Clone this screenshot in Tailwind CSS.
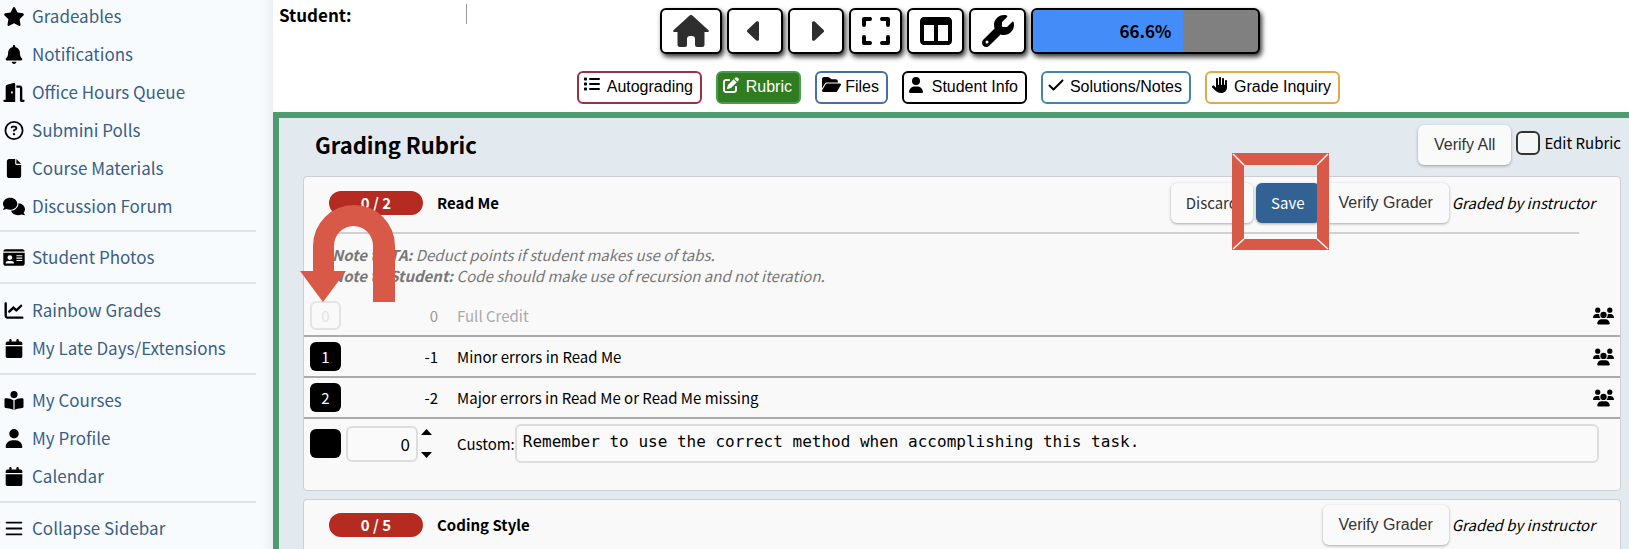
<!DOCTYPE html>
<html lang="en">
<head>
<meta charset="utf-8">
<title>Grading Rubric</title>
<script src="https://cdn.jsdelivr.net/npm/@tailwindcss/browser@4"></script>
</head>
<body class="flex min-h-screen overflow-x-hidden bg-white font-['Noto_Sans_CJK_SC','Noto_Sans',sans-serif] text-[15px] leading-5 text-black">

<svg class="hidden" aria-hidden="true">
  <symbol id="star" viewBox="0 0 576 512"><path d="M316.900 18C311.600 7 300.400 0 288.100 0s-23.400 7-28.800 18L195 150.300 51.400 171.500c-12 1.800-22 10.200-25.700 21.700s-.7 24.200 7.900 32.700L137.800 329 113.200 474.700c-2 12 3 24.200 12.900 31.300s23 8 33.800 2.300l128.300-68.500 128.300 68.500c10.800 5.700 23.900 4.900 33.800-2.300s14.900-19.300 12.900-31.300L438.500 329 542.700 225.900c8.600-8.500 11.700-21.200 7.900-32.700s-13.700-19.900-25.700-21.700L381.200 150.300 316.900 18z"/></symbol>
  <symbol id="bell" viewBox="0 0 448 512"><path d="M224 0c-17.700 0-32 14.300-32 32V51.200C119 66 64 130.600 64 208v18.800c0 47-17.300 92.400-48.500 127.600l-7.400 8.300c-8.400 9.400-10.400 22.900-5.300 34.400S19.400 416 32 416H416c12.600 0 24-7.400 29.200-18.900s3.100-25-5.300-34.400l-7.400-8.300C401.300 319.200 384 273.900 384 226.800V208c0-77.400-55-142-128-156.800V32c0-17.700-14.300-32-32-32zm45.300 493.300c12-12 18.700-28.300 18.700-45.300H224 160c0 17 6.700 33.300 18.700 45.300s28.300 18.700 45.300 18.700s33.300-6.700 45.300-18.700z"/></symbol>
  <symbol id="door" viewBox="0 0 576 512"><path d="M320 32c0-9.900-4.500-19.200-12.300-25.200S289.800-1.400 280.200 1l-179.900 45C79 51.300 64 70.500 64 92.500V448H32c-17.700 0-32 14.300-32 32s14.300 32 32 32H96 288h32V480 32zM256 256c0 17.700-10.700 32-24 32s-24-14.300-24-32s10.700-32 24-32s24 14.300 24 32zm96-128h96V480c0 17.700 14.300 32 32 32h64c17.700 0 32-14.300 32-32s-14.300-32-32-32H512V128c0-35.300-28.700-64-64-64H352v64z"/></symbol>
  <symbol id="question" viewBox="0 0 512 512"><path d="M464 256A208 208 0 1 0 48 256a208 208 0 1 0 416 0zM0 256a256 256 0 1 1 512 0A256 256 0 1 1 0 256zm169.800-90.700c7.900-22.300 29.100-37.300 52.800-37.300h58.300c34.900 0 63.100 28.300 63.100 63.100c0 22.600-12.100 43.500-31.700 54.800L280 264.400c-.2 13-10.900 23.600-24 23.600c-13.300 0-24-10.700-24-24V250.500c0-8.600 4.600-16.500 12.100-20.800l44.300-25.400c4.700-2.700 7.600-7.700 7.600-13.100c0-8.400-6.800-15.100-15.100-15.100H222.600c-3.400 0-6.400 2.100-7.500 5.300l-.4 1.200c-4.400 12.500-18.200 19-30.600 14.600s-19-18.200-14.600-30.600l.4-1.200zM224 352a32 32 0 1 1 64 0 32 32 0 1 1-64 0z"/></symbol>
  <symbol id="file" viewBox="0 0 384 512"><path d="M0 64C0 28.700 28.700 0 64 0H224V128c0 17.700 14.300 32 32 32H384V448c0 35.300-28.700 64-64 64H64c-35.300 0-64-28.700-64-64V64zm384 64H256V0L384 128z"/></symbol>
  <symbol id="comments" viewBox="0 0 640 512"><path d="M208 352c114.900 0 208-78.800 208-176S322.900 0 208 0S0 78.800 0 176c0 38.600 14.700 74.300 39.600 103.400c-3.500 9.400-8.700 17.700-14.200 24.700c-4.800 6.200-9.700 11-13.300 14.300c-6.600 6-12.100 9-12.100 17.600c0 9 7 16 16 16c21.900 0 43.900-5.600 62.200-12.500c9.200-3.500 17.800-7.400 25.300-11.400C134.100 343.300 169.800 352 208 352zM448 176c0 112.300-99.100 196.900-216.500 207C255.800 457.400 336.400 512 432 512c38.200 0 73.900-8.700 104.700-23.900c7.500 4 16 7.900 25.200 11.400c18.300 6.900 40.300 12.500 62.200 12.500c9 0 16-7 16-16c0-7-4-11-12.100-17.600c-3.600-3.300-8.500-8.100-13.300-14.300c-5.400-7-10.700-15.400-14.200-24.700c24.900-29 39.600-64.700 39.600-103.400c0-92.800-84.900-168.900-192.600-175.500c.4 5.100 .6 10.300 .6 15.500z"/></symbol>
  <symbol id="idcard" viewBox="0 0 576 512"><path fill-rule="evenodd" d="M0 96l576 0c0-35.300-28.700-64-64-64H64C28.700 32 0 60.700 0 96zm0 32V416c0 35.300 28.700 64 64 64H512c35.300 0 64-28.700 64-64V128H0zM64 405c0-34 25-53 65-53h94c40 0 65 19 65 53v11H64v-11zM176 192a64 64 0 1 1 0 128 64 64 0 1 1 0-128zm176 0h160v32H352v-32zm0 64h160v32H352v-32zm0 64h160v32H352v-32z"/></symbol>
  <symbol id="chart" viewBox="0 0 512 512"><path d="M64 64c0-17.700-14.300-32-32-32S0 46.300 0 64V400c0 44.200 35.800 80 80 80H480c17.700 0 32-14.300 32-32s-14.300-32-32-32H80c-8.800 0-16-7.200-16-16V64zm406.600 86.600c12.500-12.500 12.500-32.800 0-45.300s-32.800-12.500-45.300 0L320 210.700l-57.400-57.400c-12.500-12.500-32.800-12.500-45.300 0l-112 112c-12.500 12.500-12.500 32.800 0 45.300s32.800 12.500 45.300 0L240 221.300l57.400 57.400c12.500 12.500 32.800 12.500 45.300 0l128-128z"/></symbol>
  <symbol id="calendar" viewBox="0 0 448 512"><path d="M96 32V64H48C21.500 64 0 85.500 0 112v48H448V112c0-26.500-21.500-48-48-48H352V32c0-17.700-14.300-32-32-32s-32 14.300-32 32V64H160V32c0-17.700-14.300-32-32-32S96 14.300 96 32zM448 192H0V464c0 26.500 21.500 48 48 48H400c26.500 0 48-21.500 48-48V192z"/></symbol>
  <symbol id="reader" viewBox="0 0 512 512"><path d="M160 96a96 96 0 1 1 192 0A96 96 0 1 1 160 96zm80 152V512l-48.400-24.200c-20.900-10.400-43.500-17-66.800-19.300l-96-9.600C12.500 457.200 0 443.500 0 427V224c0-17.700 14.300-32 32-32H62.300c63.600 0 125.600 19.600 177.700 56zm32 264V248c52.100-36.400 114.100-56 177.700-56H480c17.700 0 32 14.300 32 32V427c0 16.400-12.500 30.200-28.800 31.800l-96 9.600c-23.200 2.300-45.900 8.900-66.800 19.300L272 512z"/></symbol>
  <symbol id="user" viewBox="0 0 448 512"><path d="M224 256A128 128 0 1 0 224 0a128 128 0 1 0 0 256zm-45.700 48C79.800 304 0 383.800 0 482.300C0 498.700 13.300 512 29.700 512H418.300c16.400 0 29.700-13.300 29.700-29.700C448 383.800 368.200 304 269.700 304H178.300z"/></symbol>
  <symbol id="bars" viewBox="0 0 448 512"><path d="M24 72H424a24 24 0 0 1 0 48H24a24 24 0 0 1 0-48zM24 232H424a24 24 0 0 1 0 48H24a24 24 0 0 1 0-48zM24 392H424a24 24 0 0 1 0 48H24a24 24 0 0 1 0-48z"/></symbol>
  <symbol id="home" viewBox="0 0 36 32"><path d="M16.600.6a2 2 0 0 1 2.800 0L35.300 15c1 .9.500 2-.7 2H31.500v12.500a2.500 2.500 0 0 1-2.500 2.500h-5a2 2 0 0 1-2-2v-6a3 3 0 0 0-3-3h-2a3 3 0 0 0-3 3v6a2 2 0 0 1-2 2H7a2.500 2.500 0 0 1-2.500-2.500V17H1.400c-1.200 0-1.700-1.100-.7-2z"/></symbol>
  <symbol id="left" viewBox="0 0 12 20"><path d="M9.300.6C10.400-.4 12 .3 12 1.800v16.400c0 1.500-1.600 2.200-2.700 1.200L.6 11.200a1.600 1.600 0 0 1 0-2.400z"/></symbol>
  <symbol id="expand" viewBox="0 0 28 28"><path fill="none" stroke="currentColor" stroke-width="4" stroke-linecap="round" stroke-linejoin="round" d="M2 8V2h6M20 2h6v6M26 20v6h-6M8 26H2v-6"/></symbol>
  <symbol id="columns" viewBox="0 0 512 448"><path fill-rule="evenodd" d="M0 64C0 28.700 28.700 0 64 0H448c35.300 0 64 28.700 64 64V384c0 35.300-28.700 64-64 64H64c-35.300 0-64-28.700-64-64V64zm64 64V384H224V128H64zm384 0H288V384H448V128z"/></symbol>
  <symbol id="wrench" viewBox="0 0 512 512"><path d="M352 320c88.400 0 160-71.600 160-160c0-15.300-2.200-30.100-6.200-44.200c-3.100-10.800-16.400-13.200-24.300-5.300l-76.800 76.800c-3 3-7.100 4.700-11.300 4.700H336c-8.800 0-16-7.200-16-16V118.600c0-4.200 1.700-8.300 4.700-11.300l76.800-76.800c7.900-7.900 5.400-21.200-5.300-24.300C382.100 2.200 367.300 0 352 0C263.600 0 192 71.600 192 160c0 19.100 3.400 37.500 9.500 54.500L19.900 396.100C7.200 408.800 0 426.100 0 444.100C0 481.600 30.400 512 67.900 512c18 0 35.300-7.200 48-19.900L297.500 310.500c17 6.200 35.400 9.500 54.500 9.500zM80 408a24 24 0 1 1 0 48 24 24 0 1 1 0-48z"/></symbol>
  <symbol id="list" viewBox="0 0 512 448"><path d="M24 16H72a24 24 0 0 1 24 24V88a24 24 0 0 1-24 24H24A24 24 0 0 1 0 88V40A24 24 0 0 1 24 16zM24 176H72a24 24 0 0 1 24 24V248a24 24 0 0 1-24 24H24A24 24 0 0 1 0 248V200A24 24 0 0 1 24 176zM24 336H72a24 24 0 0 1 24 24V408a24 24 0 0 1-24 24H24A24 24 0 0 1 0 408V360A24 24 0 0 1 24 336zM192 32H480a32 32 0 0 1 0 64H192a32 32 0 0 1 0-64zM192 192H480a32 32 0 0 1 0 64H192a32 32 0 0 1 0-64zM192 352H480a32 32 0 0 1 0 64H192a32 32 0 0 1 0-64z"/></symbol>
  <symbol id="edit" viewBox="0 0 512 512"><path d="M471.600 21.700c-21.900-21.900-57.300-21.900-79.200 0L362.300 51.700l97.900 97.900 30.100-30.100c21.900-21.900 21.900-57.300 0-79.200L471.600 21.700zm-299.200 220c-6.100 6.100-10.800 13.600-13.500 21.900l-29.600 88.800c-2.900 8.600-.6 18.100 5.800 24.600s15.900 8.700 24.600 5.800l88.800-29.600c8.200-2.700 15.700-7.400 21.900-13.500L437.700 172.300 339.700 74.300 172.400 241.700zM96 64C43 64 0 107 0 160V416c0 53 43 96 96 96H352c53 0 96-43 96-96V320c0-17.700-14.300-32-32-32s-32 14.300-32 32v96c0 17.700-14.300 32-32 32H96c-17.700 0-32-14.300-32-32V160c0-17.700 14.300-32 32-32h96c17.700 0 32-14.300 32-32s-14.300-32-32-32H96z"/></symbol>
  <symbol id="folder" viewBox="0 0 576 448"><path d="M88.700 191.800C100.100 172.200 121 160 143.800 160H480v-32c0-35.300-28.700-64-64-64H298.500c-17 0-33.300-6.700-45.300-18.700L226.700 18.700C214.700 6.700 198.500 0 181.500 0H64C28.700 0 0 28.700 0 64V343.700L88.700 191.800zM116.400 207.900 4.400 399.900c-5.800 9.900-5.800 22.100-.1 32.100S20.500 448 32 448H432c11.400 0 21.900-6 27.600-15.900l112-192c5.800-9.900 5.800-22.100 .1-32.100S555.500 192 544 192H144c-11.400 0-21.900 6-27.600 15.900z"/></symbol>
  <symbol id="check" viewBox="0 0 16 12"><path fill="none" stroke="currentColor" stroke-width="2" stroke-linecap="round" stroke-linejoin="round" d="M1.500 6.500l4 4L14.500 1.500"/></symbol>
  <symbol id="hand" viewBox="0 0 512 512"><path d="M288 32c0-17.700-14.300-32-32-32s-32 14.300-32 32V240c0 8.800-7.200 16-16 16s-16-7.200-16-16V64c0-17.700-14.300-32-32-32s-32 14.300-32 32V336c0 1.500 0 3.100 .1 4.600L67.600 283c-16-15.200-41.300-14.600-56.600 1.400s-14.600 41.300 1.400 56.600L124.800 448c43.100 41.100 100.400 64 160 64H304c97.200 0 176-78.800 176-176V128c0-17.700-14.300-32-32-32s-32 14.300-32 32V240c0 8.800-7.200 16-16 16s-16-7.200-16-16V64c0-17.700-14.300-32-32-32s-32 14.300-32 32V240c0 8.800-7.200 16-16 16s-16-7.200-16-16V32z"/></symbol>
  <symbol id="users" viewBox="0 0 640 512"><path d="M144 0a80 80 0 1 1 0 160A80 80 0 1 1 144 0zM512 0a80 80 0 1 1 0 160A80 80 0 1 1 512 0zM0 298.700C0 239.800 47.800 192 106.700 192h42.700c15.900 0 31 3.500 44.600 9.700c-1.300 7.200-1.900 14.700-1.900 22.300c0 38.200 16.800 72.500 43.300 96H21.300C9.600 320 0 310.400 0 298.700zM405.300 320h-.7c26.600-23.500 43.300-57.800 43.300-96c0-7.600-.7-15-1.900-22.300c13.600-6.300 28.700-9.700 44.600-9.700h42.700C592.200 192 640 239.800 640 298.700c0 11.800-9.600 21.300-21.300 21.300H405.300zM224 224a96 96 0 1 1 192 0 96 96 0 1 1-192 0zM128 485.300C128 411.700 187.700 352 261.300 352H378.700C452.300 352 512 411.700 512 485.300c0 14.700-11.900 26.700-26.700 26.700H154.700c-14.700 0-26.700-11.900-26.700-26.700z"/></symbol>
</svg>

<nav class="w-[273px] shrink-0 bg-[#f8fbfe] pt-[3px] pr-[17px] text-[17px] text-[#3a5f86] shadow-[inset_-14px_0_12px_-12px_#e3e8ec]">
  <ul class="flex flex-col gap-3 pl-[3px]">
    <li><a href="#" class="flex h-[26px] items-center gap-[7px]"><svg class="h-[19px] w-[22px] shrink-0 fill-black"><use href="#star"/></svg>Gradeables</a></li>
    <li><a href="#" class="flex h-[26px] items-center gap-[7px]"><svg class="h-[19px] w-[22px] shrink-0 fill-black"><use href="#bell"/></svg>Notifications</a></li>
    <li><a href="#" class="flex h-[26px] items-center gap-[7px]"><svg class="h-[19px] w-[22px] shrink-0 fill-black"><use href="#door"/></svg>Office Hours Queue</a></li>
    <li><a href="#" class="flex h-[26px] items-center gap-[7px]"><svg class="h-[19px] w-[22px] shrink-0 fill-black"><use href="#question"/></svg>Submini Polls</a></li>
    <li><a href="#" class="flex h-[26px] items-center gap-[7px]"><svg class="h-[19px] w-[22px] shrink-0 fill-black"><use href="#file"/></svg>Course Materials</a></li>
    <li><a href="#" class="flex h-[26px] items-center gap-[7px]"><svg class="h-[19px] w-[22px] shrink-0 fill-black"><use href="#comments"/></svg>Discussion Forum</a></li>
  </ul>
  <hr class="mt-[11px] mb-3 border-t-2 border-[#dfe3e7]">
  <ul class="flex flex-col gap-3 pl-[3px]">
    <li><a href="#" class="flex h-[26px] items-center gap-[7px]"><svg class="h-[19px] w-[22px] shrink-0 fill-black"><use href="#idcard"/></svg>Student Photos</a></li>
  </ul>
  <hr class="mt-3 mb-[13px] border-t-2 border-[#dfe3e7]">
  <ul class="flex flex-col gap-3 pl-[3px]">
    <li><a href="#" class="flex h-[26px] items-center gap-[7px]"><svg class="h-[19px] w-[22px] shrink-0 fill-black"><use href="#chart"/></svg>Rainbow Grades</a></li>
    <li><a href="#" class="flex h-[26px] items-center gap-[7px]"><svg class="h-[19px] w-[22px] shrink-0 fill-black"><use href="#calendar"/></svg>My Late Days/Extensions</a></li>
  </ul>
  <hr class="my-3 border-t-2 border-[#dfe3e7]">
  <ul class="flex flex-col gap-3 pl-[3px]">
    <li><a href="#" class="flex h-[26px] items-center gap-[7px]"><svg class="h-[19px] w-[22px] shrink-0 fill-black"><use href="#reader"/></svg>My Courses</a></li>
    <li><a href="#" class="flex h-[26px] items-center gap-[7px]"><svg class="h-[19px] w-[22px] shrink-0 fill-black"><use href="#user"/></svg>My Profile</a></li>
    <li><a href="#" class="flex h-[26px] items-center gap-[7px]"><svg class="h-[19px] w-[22px] shrink-0 fill-black"><use href="#calendar"/></svg>Calendar</a></li>
  </ul>
  <hr class="my-3 border-t-2 border-[#dfe3e7]">
  <button type="button" class="ml-[3px] flex h-[26px] items-center gap-[7px]"><svg class="h-[19px] w-[22px] shrink-0 fill-black"><use href="#bars"/></svg>Collapse Sidebar</button>
</nav>

<main class="flex min-w-0 flex-1 flex-col">
  <header class="flex pt-2 pb-2">
    <div class="-mt-1 grow basis-[18px] pl-[6px]">
      <div class="flex w-[188px] items-start justify-between">
        <h1 class="pt-px text-[17px] font-bold">Student:</h1>
        <span class="h-5 w-px bg-[#999]"></span>
      </div>
    </div>
    <div class="flex flex-col items-center gap-[17px]">
      <div class="flex gap-[5px]">
        <button type="button" aria-label="Home" class="flex h-[46px] w-[62px] items-center justify-center rounded-md border-2 border-black bg-white shadow-[2px_3px_5px_#000c]"><svg class="h-8 w-9 fill-[#2e2e2e]"><use href="#home"/></svg></button>
        <button type="button" aria-label="Previous student" class="flex h-[46px] w-14 items-center justify-center rounded-md border-2 border-black bg-white pr-1 shadow-[2px_3px_5px_#000c]"><svg class="h-5 w-3 fill-[#2e2e2e]"><use href="#left"/></svg></button>
        <button type="button" aria-label="Next student" class="flex h-[46px] w-14 items-center justify-center rounded-md border-2 border-black bg-white pl-1 shadow-[2px_3px_5px_#000c]"><svg class="h-5 w-3 rotate-180 fill-[#2e2e2e]"><use href="#left"/></svg></button>
        <button type="button" aria-label="Full screen" class="flex h-[46px] w-[53px] items-center justify-center rounded-md border-2 border-black bg-white shadow-[2px_3px_5px_#000c]"><svg class="size-7"><use href="#expand"/></svg></button>
        <button type="button" aria-label="Two panel mode" class="flex h-[46px] w-[57px] items-center justify-center rounded-md border-2 border-black bg-white shadow-[2px_3px_5px_#000c]"><svg class="h-7 w-8 fill-black"><use href="#columns"/></svg></button>
        <button type="button" aria-label="Settings" class="flex h-[46px] w-[57px] items-center justify-center rounded-md border-2 border-black bg-white shadow-[2px_3px_5px_#000c]"><svg class="size-8 fill-black"><use href="#wrench"/></svg></button>
        <div role="progressbar" aria-valuenow="66.6" aria-label="Grading progress" class="grid h-[46px] w-[229px] overflow-hidden rounded-md border-2 border-black bg-[#808080] shadow-[2px_3px_5px_#000c]">
          <div class="col-start-1 row-start-1 bg-[#448cf7]" style="width:66.6%"></div>
          <span class="col-start-1 row-start-1 place-self-center text-[17px] font-bold">66.6%</span>
        </div>
      </div>
      <div class="flex gap-[14px] pr-[3px] font-['Liberation_Sans',sans-serif] text-base leading-5">
        <button type="button" class="flex h-[33px] w-[125px] items-start justify-between rounded-md border-2 border-[#9c3045] bg-white pt-[4px] pr-[7px] pl-[5px]"><svg class="h-[14px] w-4 fill-black"><use href="#list"/></svg>Autograding</button>
        <button type="button" class="flex h-[33px] w-[85px] items-start justify-between rounded-md border-2 border-[#4c9a4f] bg-[#2f7d20] pt-[4px] pr-[7px] pl-[5px] text-white"><svg class="size-4 fill-white"><use href="#edit"/></svg>Rubric</button>
        <button type="button" class="flex h-[33px] w-[73px] items-start justify-between rounded-md border-2 border-[#466fa6] bg-white pt-[4px] pr-[7px] pl-[5px]"><svg class="h-[15px] w-[19px] fill-black"><use href="#folder"/></svg>Files</button>
        <button type="button" class="flex h-[33px] w-[125px] items-start justify-between rounded-md border-2 border-black bg-white pt-[4px] pr-[7px] pl-[5px]"><svg class="h-4 w-[14px] fill-black"><use href="#user"/></svg>Student Info</button>
        <button type="button" class="flex h-[33px] w-[150px] items-start justify-between rounded-md border-2 border-[#4583b3] bg-white pt-[4px] pr-[7px] pl-[5px]"><svg class="mt-[2px] h-3 w-4"><use href="#check"/></svg>Solutions/Notes</button>
        <button type="button" class="flex h-[33px] w-[135px] items-start justify-between rounded-md border-2 border-[#e2a849] bg-white pt-[4px] pr-[7px] pl-[5px]"><svg class="size-4 fill-black"><use href="#hand"/></svg>Grade Inquiry</button>
      </div>
    </div>
    <div class="grow basis-0"></div>
  </header>

  <section class="flex-1 border-t-[6px] border-l-[6px] border-[#509a6f] bg-[#e2e9ef] pt-[7px] pr-2 pl-6">
    <div class="flex items-start justify-between pb-[11px]">
      <h2 class="pt-[5px] pl-3 text-[22px] leading-7 font-bold">Grading Rubric</h2>
      <div class="flex items-center gap-[5px]">
        <button type="button" class="h-10 rounded-md bg-[#fafafa] px-4 font-['Liberation_Sans',sans-serif] text-base text-[#333] shadow-[0_1px_3px_#0005]">Verify All</button>
        <label class="flex items-center gap-1 pb-1"><input type="checkbox" class="size-6 appearance-none rounded-md border-2 border-[#333] bg-[#f4f6f8]">Edit Rubric</label>
      </div>
    </div>

    <article class="relative rounded-sm border border-[#ccd0d4] bg-[#f9f9f9] pb-[27px]">
      <div class="flex h-[52px] items-center justify-between pr-[25px] pl-[25px]">
        <div class="flex items-center gap-[14px] font-bold">
          <span class="h-6 w-[94px] rounded-full bg-[#b52b22] text-center leading-6 text-white">0 / 2</span>
          <h3>Read Me</h3>
        </div>
        <div class="flex items-center gap-[3px]">
          <button type="button" class="h-10 rounded-md bg-[#fafafa] px-[15px] text-[#333] shadow-[0_1px_3px_#0005]">Discard</button>
          <div class="relative">
            <button type="button" class="h-10 rounded-md bg-[#316293] px-[15px] text-white shadow-[0_1px_3px_#0005]">Save</button>
            <svg class="absolute -top-[30px] -left-6 z-10 size-[97px]" viewBox="0 0 97 97" aria-hidden="true"><path fill="#d85947" fill-rule="evenodd" d="M0 0H97V97H0zM12 12V86H85V12z"/><path stroke="#fff" stroke-width="1.500" d="M1 1l11 11M96 1L85 12M1 96l11-10M96 96L85 86"/></svg>
          </div>
          <button type="button" class="h-10 rounded-md bg-[#fafafa] px-4 font-['Liberation_Sans',sans-serif] text-base text-[#333] shadow-[0_1px_3px_#0005]">Verify Grader</button>
          <em>Graded by instructor</em>
        </div>
      </div>
      <hr class="mt-[3px] mr-[41px] ml-[25px] border-t-2 border-[#d0d0d0]">
      <div class="pt-[10px] pb-[10px] pl-7 leading-[21px] text-[#777] italic">
        <p><strong>Note to TA:</strong> Deduct points if student makes use of tabs.</p>
        <p><strong>Note to Student:</strong> Code should make use of recursion and not iteration.</p>
      </div>
      <svg class="absolute top-7 -left-1 z-10 h-[97px] w-[95px]" viewBox="0 0 95 97" aria-hidden="true"><path fill="#d85947" d="M0 66H13V41a41 41 0 0 1 82 0V97H73V41a19.500 20 0 0 0-39 0V66H46L23 97z"/></svg>
      <ul>
        <li class="flex h-[41px] items-center border-b-2 border-[#aaa] pr-[6px] pl-[6px]">
          <button type="button" class="h-[29px] w-[31px] rounded-md border-2 border-[#e3e3e3] text-[#e3e3e3]">0</button>
          <span class="w-[97px] text-right text-[#999]">0</span>
          <span class="flex-1 pl-[19px] text-[#aaa]">Full Credit</span>
          <button type="button" aria-label="Show students"><svg class="h-[18px] w-[21px] fill-black"><use href="#users"/></svg></button>
        </li>
        <li class="flex h-[41px] items-center border-b-2 border-[#aaa] pr-[6px] pl-[6px]">
          <button type="button" class="h-[29px] w-[31px] rounded-md bg-black text-white">1</button>
          <span class="w-[97px] text-right">-1</span>
          <span class="flex-1 pl-[19px]">Minor errors in Read Me</span>
          <button type="button" aria-label="Show students"><svg class="h-[18px] w-[21px] fill-black"><use href="#users"/></svg></button>
        </li>
        <li class="flex h-[41px] items-center border-b-2 border-[#aaa] pr-[6px] pl-[6px]">
          <button type="button" class="h-[29px] w-[31px] rounded-md bg-black text-white">2</button>
          <span class="w-[97px] text-right">-2</span>
          <span class="flex-1 pl-[19px]">Major errors in Read Me or Read Me missing</span>
          <button type="button" aria-label="Show students"><svg class="h-[18px] w-[21px] fill-black"><use href="#users"/></svg></button>
        </li>
        <li class="flex items-center pt-[5px] pr-[21px] pl-[6px]">
          <button type="button" aria-label="Custom mark" class="h-[29px] w-[31px] rounded-md bg-black"></button>
          <input type="text" inputmode="numeric" aria-label="Custom points" value="0" class="ml-[5px] h-9 w-[72px] rounded-md border-2 border-[#ddd] bg-[#fafafa] pr-[6px] text-right text-[17px]">
          <div class="ml-[3px] flex w-[36px] flex-col gap-[17px]">
            <button type="button" aria-label="Increase points"><svg class="block h-[6px] w-[11px]" viewBox="0 0 11 6"><path d="M0 6L5.500 0 11 6z"/></svg></button>
            <button type="button" aria-label="Decrease points"><svg class="block h-[6px] w-[11px]" viewBox="0 0 11 6"><path d="M0 0H11L5.500 6z"/></svg></button>
          </div>
          <label for="custom">Custom:</label>
          <textarea id="custom" rows="1" class="block h-[39px] min-w-0 flex-1 resize-none rounded-md border-2 border-[#ddd] bg-[#fafafa] px-[6px] py-[6px] font-['DejaVu_Sans_Mono',monospace] text-base leading-5">Remember to use the correct method when accomplishing this task.</textarea>
        </li>
      </ul>
    </article>

    <article class="mt-2 rounded-t-sm border border-b-0 border-[#ccd0d4] bg-[#f9f9f9]">
      <div class="flex h-[50px] items-center justify-between pr-[25px] pl-[25px]">
        <div class="flex items-center gap-[14px] font-bold">
          <span class="h-6 w-[94px] rounded-full bg-[#b52b22] text-center leading-6 text-white">0 / 5</span>
          <h3>Coding Style</h3>
        </div>
        <div class="flex items-center gap-[3px]">
          <button type="button" class="h-10 rounded-md bg-[#fafafa] px-4 font-['Liberation_Sans',sans-serif] text-base text-[#333] shadow-[0_1px_3px_#0005]">Verify Grader</button>
          <em>Graded by instructor</em>
        </div>
      </div>
    </article>
  </section>
</main>
</body>
</html>
